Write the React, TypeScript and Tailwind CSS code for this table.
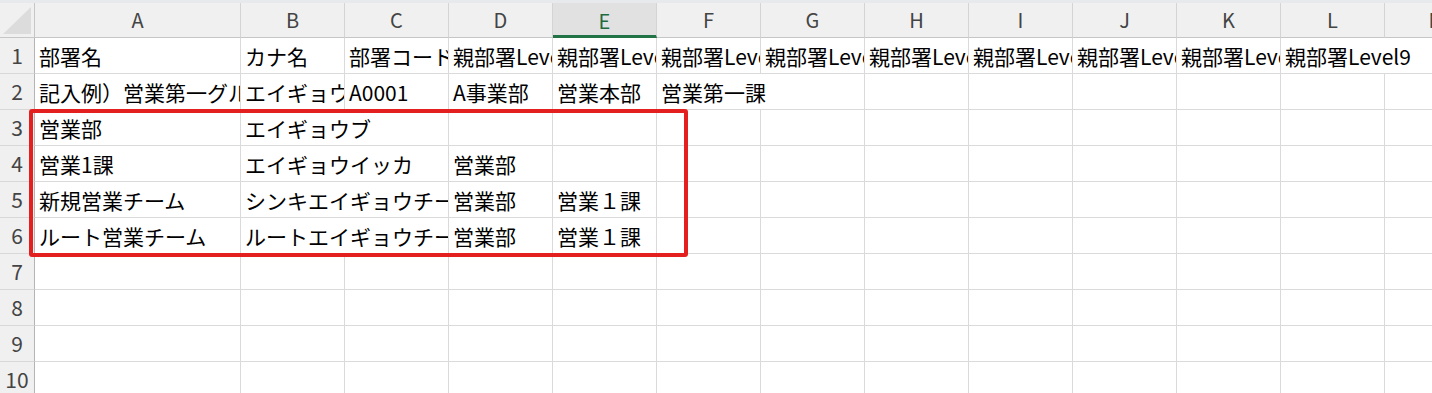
const cols = ['A', 'B', 'C', 'D', 'E', 'F', 'G', 'H', 'I', 'J', 'K', 'L', 'M']

const rows: string[][] = [
  ['部署名', 'カナ名', '部署コード', '親部署Level1', '親部署Level2', '親部署Level3', '親部署Level4', '親部署Level5', '親部署Level6', '親部署Level7', '親部署Level8', '親部署Level9'],
  ['記入例）営業第一グループ', 'エイギョウダイイチグループ', 'A0001', 'A事業部', '営業本部', '営業第一課'],
  ['営業部', 'エイギョウブ'],
  ['営業1課', 'エイギョウイッカ', '', '営業部'],
  ['新規営業チーム', 'シンキエイギョウチーム', '', '営業部', '営業１課'],
  ['ルート営業チーム', 'ルートエイギョウチーム', '', '営業部', '営業１課'],
  [],
  [],
  [],
  [],
]

// text that runs into the empty cell on its right
const spans: Record<string, boolean> = { '0-11': true, '1-5': true, '2-1': true, '3-1': true, '4-1': true, '5-1': true }

function Corner() {
  return (
    <div className="w-[35px] h-[35px] shrink-0 bg-[#f0f0f0] border-r border-b border-[#c6c6c6] flex items-end justify-end pr-[3px] pb-[3px]">
      <svg width="28" height="27" viewBox="0 0 28 27">
        <polygon points="28,0 28,27 0,27" fill="#dcdcdc" />
      </svg>
    </div>
  )
}

export default function App() {
  return (
    <div className="w-[1432px] h-[393px] overflow-hidden bg-white font-['Noto_Sans_CJK_JP','Yu_Gothic',sans-serif]">
      <div className="h-[3px] bg-[#e7e9ed]" />
      <div className="relative">
        {/* column headers */}
        <div className="flex">
          <Corner />
          {cols.map((c, i) => (
            <div
              key={c}
              className={`h-[35px] shrink-0 flex items-center justify-center text-[20px] leading-none border-r border-[#d4d4d4] ${i === 0 ? 'w-[206px]' : 'w-[104px]'} ${c === 'E' ? 'bg-[#e1e1e1] text-[#1e6b41] border-b-[3px] border-b-[#217346] pt-[3px]' : 'bg-[#f0f0f0] text-[#444] border-b border-b-[#c6c6c6]'}`}
            >
              {c}
            </div>
          ))}
        </div>

        {rows.map((r, ri) => {
          const cells = []
          for (let ci = 0; ci < cols.length; ci++) {
            const text = r[ci] ?? ''
            const wide = spans[`${ri}-${ci}`]
            const w = ci === 0 ? 'w-[206px]' : wide ? 'w-[208px]' : 'w-[104px]'
            cells.push(
              <div
                key={ci}
                className={`${w} h-[36px] shrink-0 flex items-center pl-[4px] pt-[1px] overflow-hidden whitespace-nowrap text-[21px] leading-none text-black border-r border-b border-[#dadada]`}
              >
                {text}
              </div>
            )
            if (wide) ci++
          }
          return (
            <div key={ri} className="flex">
              <div className="w-[35px] h-[36px] shrink-0 flex items-center justify-center bg-[#f0f0f0] text-[#444] text-[21px] leading-none border-r border-r-[#b4b4b4] border-b border-b-[#d8d8d8]">
                {ri + 1}
              </div>
              {cells}
            </div>
          )
        })}

        {/* red highlight frame */}
        <div className="absolute left-[29px] top-[106px] w-[659px] h-[148px] border-4 border-[#e3201f] rounded-[3px] pointer-events-none" />
      </div>
    </div>
  )
}
